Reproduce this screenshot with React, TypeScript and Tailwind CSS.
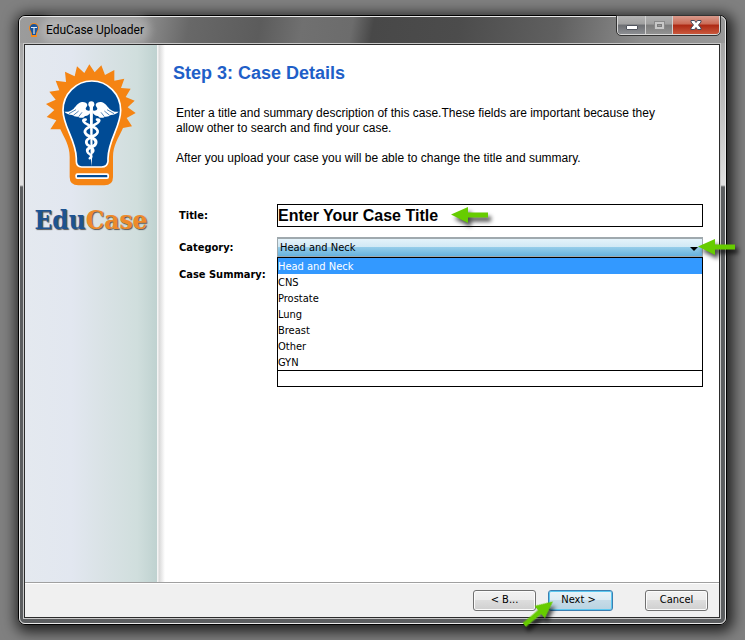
import React, { useState } from "react";
import clsx from "clsx";

const categories = [
    "Head and Neck",
    "CNS",
    "Prostate",
    "Lung",
    "Breast",
    "Other",
    "GYN",
];

const AppIcon = () => (
    <svg viewBox="0 0 12 16" className="h-4 w-3" aria-hidden="true">
        <path
            d="M6 1a5 5 0 0 0-5 5c0 2.500 1.500 3.500 2 5.500V15h6v-3.500c.5-2 2-3 2-5.500a5 5 0 0 0-5-5z"
            fill="#f58a1c"
        />
        <path
            d="M6 2a4 4 0 0 0-4 4c0 2.500 2 3.500 2 7h4c0-3.500 2-4.500 2-7a4 4 0 0 0-4-4z"
            fill="#17539b"
        />
        <path d="M3 5.500h6M6 5v7" stroke="#dfe8f2" strokeWidth="1.200" />
    </svg>
);

const Wing = ({ className }: { className?: string }) => (
    <g className={className}>
        <path
            d="M208 190C202 196 198 200 192 199 188 206 178 206 171 201 164 202 158 199 154 196 144 195 135 191 130 186 141 188 150 184 158 177 166 168 173 158 183 157 190 156 199 160 199 166 199 171 194 173 194 177 196 183 203 184 208 182Z"
            fill="#fff"
        />
        <path
            d="M144 192 165 180M157 197 173 184M173 201 183 188"
            fill="none"
            stroke="#004b95"
            strokeWidth="2"
        />
    </g>
);

const Logo = () => (
    <svg
        viewBox="75 40 270 372"
        className="h-[124px] w-[90px]"
        role="img"
        aria-label="EduCase logo"
    >
        <path
            d="M88 239 106 212 77 202 100 181 75 163 104 150 85 126 115 122 104 93 135 97 132 66 161 80 168 50 190 70 205 44 221 68 241 47 252 76 280 61 280 93 310 87 300 115 329 117 314 142 341 153 320 173 344 190 317 205 333 230 306 235C292 265 276 288 276 322V382Q276 407 250 407H172Q146 407 146 382V322C146 288 130 265 118 239Z"
            fill="#f58413"
        />
        <path
            d="M126 182A86.500 88 0 0 1 299 182C299 232 262 270 261 326V335Q259 352 242 352H182Q166 352 166 335V326C165 270 126 232 126 182Z"
            fill="#004b95"
            stroke="#fff"
            strokeWidth="5"
        />
        <rect x="163" y="371" width="101" height="17" rx="6" fill="#fff" />
        <rect x="168" y="376" width="91" height="7" rx="2" fill="#004b95" />
        <g fill="#fff">
            <circle cx="211" cy="164" r="9" />
            <path d="M206 168h10l-2 150-3 32-2-32z" />
        </g>
        <Wing />
        <g transform="translate(423 0) scale(-1 1)">
            <Wing />
        </g>
        <g fill="none" stroke="#fff" strokeLinecap="round">
            <path d="M194 210C181 208 187 220 204 227 228 235 238 245 223 256" strokeWidth="8" />
            <path d="M228 210C241 208 234 220 218 227 194 235 184 245 198 256" strokeWidth="8" />
            <path d="M198 256C212 264 233 270 222 286 212 294 198 294 199 302" strokeWidth="9" />
            <path d="M223 256C208 264 188 270 199 285 211 292 222 299 214 308" strokeWidth="8" />
            <path d="M199 302C196 313 211 311 211 321L206 326" strokeWidth="7" />
        </g>
    </svg>
);

const Arrow = ({ className }: { className?: string }) => (
    <svg
        viewBox="0 0 37 16"
        className={clsx(
            "pointer-events-none absolute z-20 h-4 w-[37px] overflow-visible",
            className
        )}
        aria-hidden="true"
    >
        <path d="M0 7.500 17 0v5.500h20v5H17V16z" fill="#66cc00" />
    </svg>
);

const WindowButtons = () => (
    <div className="-mt-px flex h-[19px] overflow-hidden rounded-b-[4px] border border-t-0 border-[#d8d8d8] outline outline-[#333]">
        <button
            type="button"
            aria-label="Minimize"
            className="flex w-7 items-center justify-center border-r border-[#d0d0d0] bg-[linear-gradient(#b4b4b4,#a0a0a0_45%,#6c6e72_50%,#8c8e92)]"
        >
            <span className="mt-1 h-[5px] w-3 rounded-[1px] border border-[#50545e] bg-white" />
        </button>
        <button
            type="button"
            aria-label="Maximize"
            disabled
            className="flex w-[27px] items-center justify-center border-r border-[#d0d0d0] bg-[linear-gradient(#b0b0b0,#a0a0a0_45%,#7c7c7c_50%,#929292)]"
        >
            <span className="flex h-[9px] w-[11px] items-center justify-center border border-[#8a8a8a] bg-[#c8c8c8]">
                <span className="h-[3px] w-[5px] border border-[#7c7c7c] bg-[#999]" />
            </span>
        </button>
        <button
            type="button"
            aria-label="Close"
            className="flex w-[46px] items-center justify-center bg-[linear-gradient(#d99a8c,#cb6a55_45%,#ad2813_50%,#c9583c)]"
        >
            <svg viewBox="0 0 12 10" className="h-[10px] w-3">
                <path
                    d="M1 .5h3.500L6 2.500 7.500.5H11v1.500L8.500 5 11 8v1.500H7.500L6 7.500 4.500 9.500H1V8l2.500-3L1 2z"
                    fill="#fff"
                    stroke="#454a5c"
                    strokeWidth="1"
                />
            </svg>
        </button>
    </div>
);

const CategoryPicker = () => {
    const [selected, setSelected] = useState(categories[0]);

    return (
        <div className="relative">
            <select
                id="category"
                value={selected}
                onChange={(e) => setSelected(e.target.value)}
                className="block h-5 w-full appearance-none border border-t-2 border-[#9fa9ae] bg-[linear-gradient(#e4f3fa,#cfe8f5_50%,#94cce9_50%,#66b2de)] px-0.5 text-[11px] leading-4 outline-none"
            >
                {categories.map((item) => (
                    <option key={item}>{item}</option>
                ))}
            </select>
            <svg
                viewBox="0 0 8 4"
                className="pointer-events-none absolute top-[10px] right-[5px] h-1 w-2"
            >
                <path d="M0 0h8L4 4z" />
            </svg>
            <ul
                role="listbox"
                aria-label="Category options"
                className="absolute top-5 z-10 w-full border border-black bg-white text-[11px] leading-4"
            >
                {categories.map((item) => (
                    <li
                        key={item}
                        role="option"
                        aria-selected={item === selected}
                        onClick={() => setSelected(item)}
                        className={clsx(
                            "h-4 leading-[17px]",
                            item === selected && "bg-[#3399ff] text-white"
                        )}
                    >
                        {item}
                    </li>
                ))}
            </ul>
            <Arrow className="top-0.5 -right-8 drop-shadow-[3px_4px_2px_rgba(0,0,0,0.7)]" />
        </div>
    );
};

const App = () => {
    return (
        <main className="flex min-h-screen bg-[#808080] px-[18px] py-[15px] font-['DejaVu_Sans_Condensed','DejaVu_Sans',sans-serif] text-[11px] text-black">
            <div className="flex flex-1 rounded-[7px] border border-black shadow-[2px_3px_14px_4px_rgba(0,0,0,0.75)]">
                <div className="flex flex-1 flex-col rounded-md border border-[#e8e8e8] bg-[linear-gradient(#999,#e0e0e0_168px,#5c5e60_170px,#5c5e60)] pr-1 pb-1 pl-[3px]">
                    <header className="-mr-1 -ml-[3px] flex h-[26px] justify-between rounded-t-md bg-[linear-gradient(100deg,#9c9c9c,#8c8c8c_18%,#686868_24%,#5c5c5c_34%,#707070_40%,#6c6c6c_47%,#484848_50%,#4c4c4c_62%,#606060_76%,#8c8c8c_88%,#999)] pr-[5px] pl-2">
                        <div className="flex items-center gap-1.5">
                            <AppIcon />
                            <span className="rounded-full bg-white/25 font-['Roboto',sans-serif] text-xs shadow-[0_0_8px_6px_rgba(255,255,255,0.25)]">
                                EduCase Uploader
                            </span>
                        </div>
                        <WindowButtons />
                    </header>

                    <div className="flex flex-1 border border-[#c8c8c8]">
                        <div className="flex flex-1 flex-col border border-[#2c2c2c] bg-white">
                            <div className="flex flex-1">
                                <aside className="flex w-[132px] shrink-0 flex-col items-center bg-[linear-gradient(90deg,#e4e9ef,#e2e7f0_35%,#d9e2e5_60%,#d0dedd_85%,#bfd2d0)] pt-[18px]">
                                    <Logo />
                                    <p className="mt-[17px] font-['DejaVu_Serif_Condensed','DejaVu_Serif',serif] text-[26px] leading-8 font-bold [text-shadow:1px_1px_1px_#555]">
                                        <span className="text-[#1d5391]">Edu</span>
                                        <span className="text-[#ee8a2a]">Case</span>
                                    </p>
                                </aside>
                                <div className="w-2 shrink-0 bg-[linear-gradient(90deg,#f4f4f4_1px,#d8d8d8_2px,#fff)]" />

                                <section className="min-w-0 flex-1 pt-4 pr-4 pl-2">
                                    <h1 className="font-['Liberation_Sans',sans-serif] text-lg leading-6 font-bold text-[#1f5fc8]">
                                        Step 3: Case Details
                                    </h1>
                                    <div className="mt-[21px] space-y-[15px] pr-6 pl-[3px] font-['Liberation_Sans',sans-serif] text-xs leading-[15px]">
                                        <p>
                                            Enter a title and summary description of this
                                            case.These fields are important because they
                                            allow other to search and find your case.
                                        </p>
                                        <p>
                                            After you upload your case you will be able to
                                            change the title and summary.
                                        </p>
                                    </div>

                                    <form className="mt-[38px] grid grid-cols-[98px_1fr] gap-y-[10px] pl-1.5">
                                        <label htmlFor="title" className="pt-1 leading-4 font-bold">
                                            Title:
                                        </label>
                                        <div className="relative">
                                            <input
                                                id="title"
                                                type="text"
                                                defaultValue="Enter Your Case Title"
                                                className="block h-[23px] w-full border border-black bg-white font-['Liberation_Sans',sans-serif] text-base font-bold outline-none"
                                            />
                                            <Arrow className="top-[3px] left-[174px] drop-shadow-[3px_4px_2px_rgba(0,0,0,0.7)]" />
                                        </div>

                                        <label htmlFor="category" className="pt-[3px] leading-4 font-bold">
                                            Category:
                                        </label>
                                        <CategoryPicker />

                                        <label htmlFor="summary" className="leading-4 font-bold">
                                            Case Summary:
                                        </label>
                                        <textarea
                                            id="summary"
                                            className="block h-[120px] w-full resize-none border border-black bg-white outline-none"
                                        />
                                    </form>
                                </section>
                            </div>

                            <footer className="flex h-[35px] shrink-0 justify-end border-t border-[#a0a0a0] bg-[#f0f0f0] pt-[7px] pr-[11px] shadow-[inset_0_1px_0_#fff]">
                                <button
                                    type="button"
                                    className="mr-3 h-[21px] w-[63px] rounded-[3px] border border-[#707070] bg-[linear-gradient(#f2f2f2,#ebebeb_50%,#dddddd_50%,#cfcfcf)] shadow-[inset_0_0_0_1px_#fcfcfc]"
                                >
                                    &lt; B...
                                </button>
                                <div className="relative mr-8">
                                    <button
                                        type="button"
                                        className="h-[21px] w-[65px] rounded-[3px] border border-[#3c7fb1] bg-[linear-gradient(#e8f3f9,#dcebf3_50%,#c6dbe7_50%,#b9d3e2)] pr-1 shadow-[inset_0_0_0_1px_#5cc8f0]"
                                    >
                                        Next &gt;
                                    </button>
                                    <Arrow className="top-[15px] -left-7 rotate-[140deg] drop-shadow-[1px_-5px_2px_rgba(0,0,0,0.7)]" />
                                </div>
                                <button
                                    type="button"
                                    className="h-[21px] w-[63px] rounded-[3px] border border-[#707070] bg-[linear-gradient(#f2f2f2,#ebebeb_50%,#dddddd_50%,#cfcfcf)] shadow-[inset_0_0_0_1px_#fcfcfc]"
                                >
                                    Cancel
                                </button>
                            </footer>
                        </div>
                    </div>
                </div>
            </div>
        </main>
    );
};

export default App;
